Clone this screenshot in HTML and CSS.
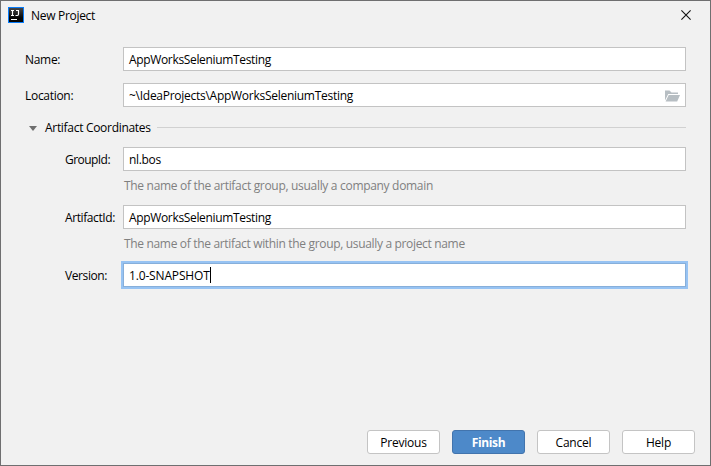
FILE: index.html
```html
<!DOCTYPE html>
<html lang="en">
<head>
<meta charset="utf-8">
<title>New Project</title>
<link rel="stylesheet" href="styles.css">
</head>
<body>
<main class="dialog">
  <header class="titlebar">
    <svg class="logo" width="16" height="16" viewBox="0 0 16 16"><defs><linearGradient id="face" x2="0" y2="1"><stop stop-color="#454545"/><stop offset=".7" stop-color="#050505"/></linearGradient></defs><rect width="16" height="16" fill="#087cfa"/><rect x="1" y="1" width="14" height="14" fill="url(#face)"/><path d="M3 3.5h3M3 8.5h3M4.5 3.5v5M8 3.5h3M10.5 3.5v3.8q0 1.2-1.2 1.2H7.5" fill="none" stroke="#fff" stroke-width="1.2"/><path d="M3 12.5h6" stroke="#fff"/></svg>
    <h1 class="title">New Project</h1>
    <svg class="close" width="10" height="10" viewBox="0 0 10 10"><path d="M.4.4l9.2 9.2M9.6.4L.4 9.6" stroke="#111" stroke-width="1.1"/></svg>
  </header>
  <section class="form">
    <div class="row"><label class="label name">Name:</label><div class="field"><span class="value">AppWorksSeleniumTesting</span></div></div>
    <div class="row"><label class="label location">Location:</label><div class="field"><span class="value path">~\IdeaProjects\AppWorksSeleniumTesting</span>
      <svg class="folder" width="15" height="12" viewBox="0 0 15 12"><path d="M0 10.5V.5h4.5l2 2H13V4H3.2z" fill="#b7bec3"/><path d="M3.7 5H15l-2.8 6.5H.6z" fill="#b7bec3"/></svg></div></div>
    <div class="section"><svg class="arrow" width="8" height="5" viewBox="0 0 8 5"><path d="M0 0h8L4 5z" fill="#6e6e6e"/></svg><span class="heading">Artifact Coordinates</span><span class="rule"></span></div>
    <div class="row nested"><label class="label group">GroupId:</label><div class="field"><span class="value short">nl.bos</span></div></div>
    <p class="hint">The name of the artifact group, usually a company domain</p>
    <div class="row nested"><label class="label artifact">ArtifactId:</label><div class="field"><span class="value">AppWorksSeleniumTesting</span></div></div>
    <p class="hint within">The name of the artifact within the group, usually a project name</p>
    <div class="row nested"><label class="label version">Version:</label><div class="field focused"><span class="value snapshot">1.0-SNAPSHOT</span><span class="caret"></span></div></div>
  </section>
  <footer class="actions">
    <button class="button">Previous</button>
    <button class="button primary">Finish</button>
    <button class="button">Cancel</button>
    <button class="button">Help</button>
  </footer>
</main>
</body>
</html>
```
FILE: styles.css
```css
* { box-sizing: border-box; }
body { margin: 0; font: 12px/16px "Open Sans", "Noto Sans", sans-serif; color: #000; }
.dialog { width: 711px; height: 466px; border: 1px solid #6f6f70; background: #f1f1f1; display: flex; flex-direction: column; overflow: hidden; }
.titlebar { height: 46px; padding: 6px 19px 0 7px; display: flex; align-items: flex-start; }
.title { margin: 1px 0 0 7px; font-size: 12px; font-weight: 400; line-height: 16px; letter-spacing: -.3px; flex: 1; }
.close { margin-top: 3px; }
.form { flex: 1; padding: 0 24px; }
.row { display: flex; align-items: center; margin-bottom: 12px; }
.label { width: 98px; padding-top: 2px; flex: none; letter-spacing: -.4px; white-space: nowrap; }
.name, .location { letter-spacing: -.3px; }
.nested { margin-bottom: 0; padding-left: 40px; }
.nested .label { width: 58px; }
.group { letter-spacing: -.55px; }
.field { flex: 1; height: 24px; padding: 0 5px; display: flex; align-items: center; background: #fff; border: 1px solid #c3c3c3; }
.value { padding-top: 2px; letter-spacing: -.34px; white-space: nowrap; }
.path { letter-spacing: -.27px; }
.snapshot { letter-spacing: -.16px; }
.folder { margin-left: auto; margin-top: 1px; }
.focused { border-color: #87afda; box-shadow: 0 0 0 2px #97c3f3; }
.caret { width: 1px; height: 16px; background: #000; }
.section { height: 16px; margin: 13px 0 11px; padding-left: 4px; display: flex; align-items: center; }
.heading { margin-left: 8px; letter-spacing: -.3px; }
.rule { flex: 1; height: 1px; margin: -1px 0 0 6px; background: #d1d1d1; }
.hint { height: 34px; margin: 0; padding: 7px 0 0 99px; color: #808080; letter-spacing: -.31px; white-space: nowrap; }
.within { letter-spacing: -.33px; }
.actions { display: flex; justify-content: flex-end; gap: 12px; padding: 0 15px 11px 0; }
.button { width: 73px; height: 24px; padding: 1px 0 0; border: 1px solid #c4c4c4; border-radius: 3px; background: #fff; color: #000; font: inherit; letter-spacing: -.2px; }
.primary { background: #4d89c9; border-color: #4274ad; color: #fff; font-weight: 700; letter-spacing: -.35px; }
```
